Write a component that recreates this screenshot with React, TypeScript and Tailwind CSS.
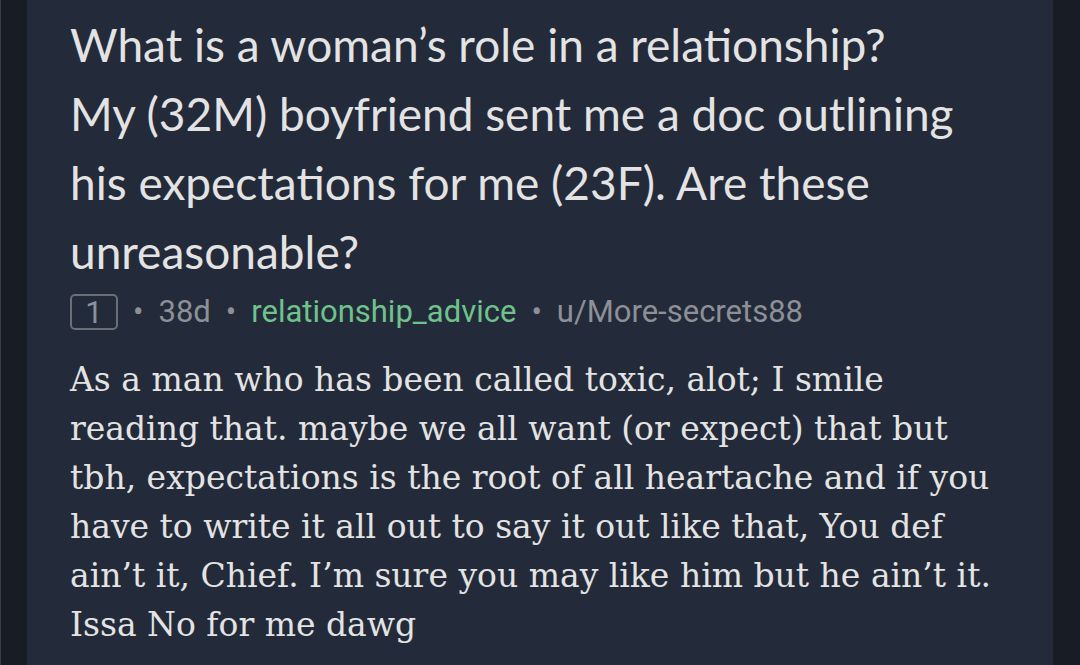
export default function App() {
  const title = [
    'What is a woman’s role in a relationship?',
    'My (32M) boyfriend sent me a doc outlining',
    'his expectations for me (23F). Are these',
    'unreasonable?',
  ];
  const body = [
    'As a man who has been called toxic, alot; I smile',
    'reading that. maybe we all want (or expect) that but',
    'tbh, expectations is the root of all heartache and if you',
    'have to write it all out to say it out like that, You def',
    'ain’t it, Chief. I’m sure you may like him but he ain’t it.',
    'Issa No for me dawg',
  ];

  return (
    <div className="flex h-[665px] w-[1080px] overflow-hidden bg-[#181d25]">
      <div className="w-px bg-[#3a3f47]" />
      <div className="w-[26px]" />
      <div className="flex-1 bg-[#232b3a] pl-[43px] pt-[10px]">
        {/* title */}
        <div className="font-['Lato',sans-serif] text-[46px] leading-[69px] text-[#e3e3e3]">
          {title.map((t) => (
            <div key={t} className="whitespace-nowrap">
              {t}
            </div>
          ))}
        </div>

        {/* meta */}
        <div className="mt-[3px] flex items-center font-['Roboto',sans-serif] text-[31px] text-[#8d9097]">
          <span className="flex h-[36px] w-[48px] items-center justify-center rounded-[5px] border-2 border-[#6b6f76] leading-none">
            1
          </span>
          <span className="mx-[15px]">•</span>
          <span>38d</span>
          <span className="mx-[15px]">•</span>
          <span className="text-[#70c28c]">relationship_advice</span>
          <span className="mx-[15px]">•</span>
          <span>u/More-secrets88</span>
        </div>

        {/* comment body */}
        <div className="mt-[19px] font-['DejaVu_Serif',serif] text-[33px] leading-[49px] text-[#e3e3e3]">
          {body.map((t) => (
            <div key={t} className="whitespace-nowrap">
              {t}
            </div>
          ))}
        </div>
      </div>
      <div className="w-[27px]" />
    </div>
  );
}
